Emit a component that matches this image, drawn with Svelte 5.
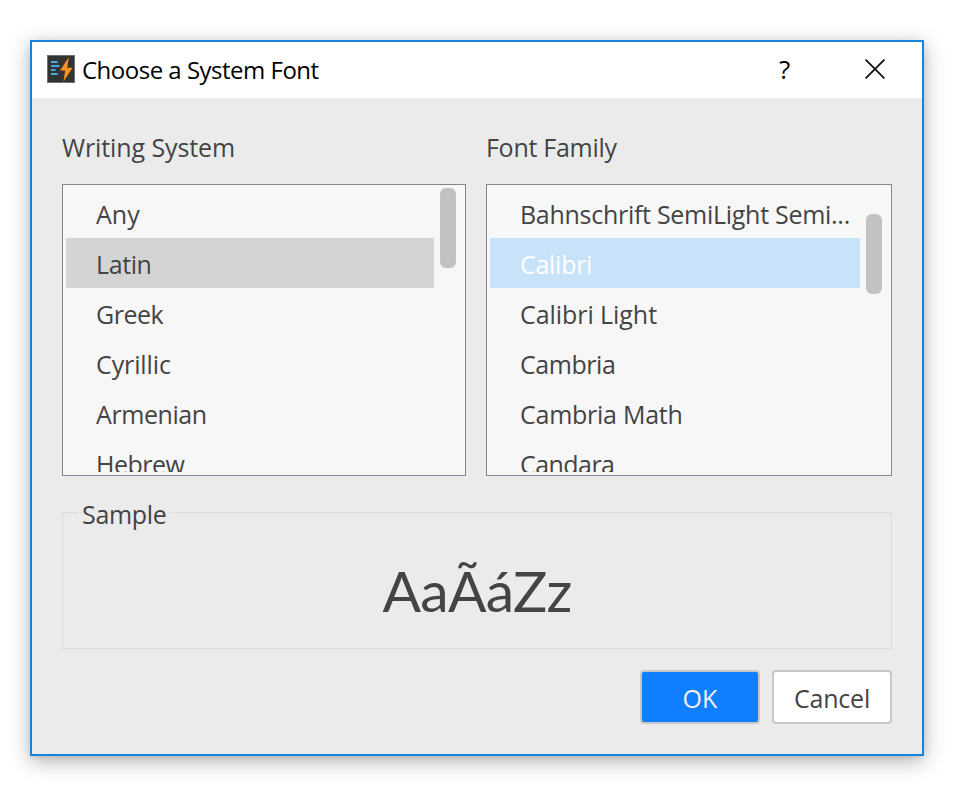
<script>
  const panels = [
    {
      title: 'Writing System', ls: -0.1, width: 404, rowWidth: 368, thumbTop: 0, selected: 'muted',
      items: [['Any', 0], ['Latin', -0.4], ['Greek', -0.5], ['Cyrillic', -0.12], ['Armenian', -0.42], ['Hebrew', -0.5]]
    },
    {
      title: 'Font Family', ls: -0.28, width: 406, rowWidth: 370, thumbTop: 26, selected: 'active',
      items: [['Bahnschrift SemiLight Semi...', -0.28], ['Calibri', -0.28], ['Calibri Light', -0.06], ['Cambria', -0.44], ['Cambria Math', -0.25], ['Candara', -0.55]]
    }
  ];
</script>

<div class="desktop">
  <div class="dialog">
    <header>
      <svg class="app" width="28" height="28" viewBox="0 0 28 28">
        <rect x=".5" y=".5" width="27" height="27" fill="#333" stroke="#707070" />
        <path d="M4.7 7h5.2M4.7 11h7M4.7 15h3.2M4.7 19h5.2" stroke="#45a9e6" stroke-width="1.8" stroke-linecap="round" />
        <path d="M21.8 2.2 13 15.6h5.2L16.5 26.4 25.6 12.8h-5.4Z" fill="#f7931e" />
      </svg>
      <h1>Choose a System Font</h1>
      <span class="help">?</span>
      <svg class="close" width="20" height="20" viewBox="0 0 20 20"><path d="M.6.6 19.4 19.4M19.4.6.6 19.4" stroke="#111" stroke-width="1.8" /></svg>
    </header>
    <main>
      <div class="panels">
        {#each panels as p}
          <section style:width="{p.width}px">
            <h2><span style:letter-spacing="{p.ls}px">{p.title}</span></h2>
            <div class="box">
              <ul style:width="{p.rowWidth}px">
                {#each p.items as [name, ls], i}
                  <li class={i === 1 ? p.selected : ''}><span style:letter-spacing="{ls}px">{name}</span></li>
                {/each}
              </ul>
              <div class="thumb" style:margin-top="{p.thumbTop}px"></div>
            </div>
          </section>
        {/each}
      </div>
      <fieldset>
        <legend><span>Sample</span></legend>
        <div class="sample">AaÃáZz</div>
      </fieldset>
      <div class="actions">
        <button class="ok"><span>OK</span></button>
        <button class="cancel"><span>Cancel</span></button>
      </div>
    </main>
  </div>
</div>

<style>
  :global(body) { margin: 0; background: #fff; }
  .desktop { box-sizing: border-box; width: 958px; height: 794px; padding: 40px 34px 38px 30px; overflow: hidden; font-family: "Open Sans", "Noto Sans", sans-serif; font-size: 25px; color: #444; }
  .dialog { box-sizing: border-box; width: 894px; height: 716px; border: 2px solid #1883d7; background: #ebebeb; box-shadow: 0 5px 20px rgba(0, 0, 0, .3), 0 2px 6px rgba(0, 0, 0, .08); }
  header { display: flex; height: 56px; background: #fff; color: #000; padding-left: 15px; }
  .app { margin-top: 13px; flex: none; }
  h1 { margin: 0 0 0 7px; width: 697px; font-size: 24px; font-weight: 400; line-height: 56px; letter-spacing: -.5px; white-space: nowrap; }
  .help { width: 16px; font-size: 26px; line-height: 54px; }
  .close { margin: 17px 0 0 70px; flex: none; }
  main { padding: 26px 30px 0; }
  .panels { display: flex; gap: 20px; }
  h2 { margin: 0 0 10px; height: 50px; line-height: 47px; font-size: 25px; font-weight: 400; white-space: nowrap; }
  .box { box-sizing: border-box; display: flex; height: 292px; border: 1px solid #828790; background: #f7f7f7; padding: 3px; }
  ul { margin: 0; padding: 0; list-style: none; height: 284px; overflow: hidden; }
  li { box-sizing: border-box; height: 50px; line-height: 52px; padding-left: 30px; white-space: nowrap; }
  .muted { background: #d4d4d4; }
  .active { background: #c8e2f9; color: #fff; }
  .thumb { width: 16px; height: 80px; margin-left: 6px; border-radius: 6px; background: #c2c2c2; }
  fieldset { box-sizing: border-box; width: 830px; height: 155px; margin: 18px 0 0; padding: 0; border: 1px solid #dcdcdc; }
  legend { margin-left: 15px; padding: 0 4px; height: 36px; line-height: 40px; width: 85px; letter-spacing: -.3px; }
  .sample { font-family: Lato, sans-serif; font-size: 57px; line-height: 80px; padding-top: 20px; letter-spacing: -.7px; text-align: center; }
  .actions { display: flex; justify-content: flex-end; gap: 12px; margin-top: 21px; }
  button { box-sizing: border-box; width: 120px; height: 54px; border: 2px solid #c8c8c8; border-radius: 4px; padding: 2px 0 0; font: inherit; line-height: 46px; text-align: center; }
  .ok { background: #107fff; color: #f0f0f0; }
  .cancel { background: #fff; color: #444; letter-spacing: -.2px; }
</style>
